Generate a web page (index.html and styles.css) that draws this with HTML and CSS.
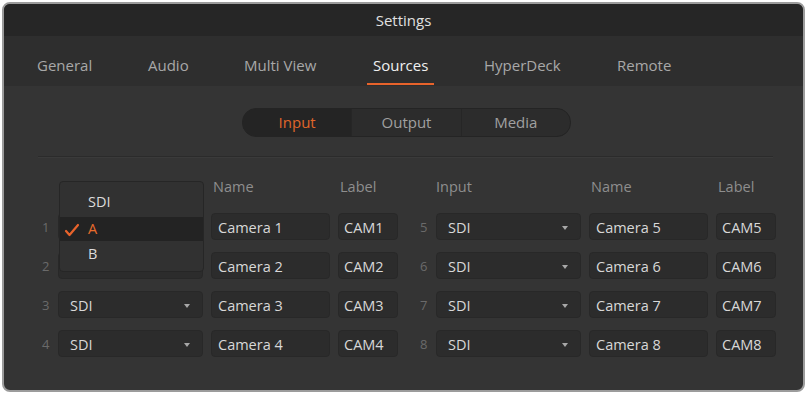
FILE: index.html
```html
<!DOCTYPE html>
<html lang="en">
<head>
    <meta charset="UTF-8">
    <title>Settings</title>
    <link rel="stylesheet" href="styles.css">
</head>
<body>
    <div class="window">
        <div class="titlebar">Settings</div>
        <div class="tabs">
            <span class="tab">General</span>
            <span class="tab">Audio</span>
            <span class="tab">Multi View</span>
            <span class="tab active">Sources</span>
            <span class="tab">HyperDeck</span>
            <span class="tab">Remote</span>
        </div>
        <div class="content">
            <div class="segmented">
                <span class="seg active">Input</span>
                <span class="seg">Output</span>
                <span class="seg">Media</span>
            </div>
            <div class="divider"></div>

            <div class="sources">
                <!-- Inputs 1 - 4 -->
                <div class="group">
                    <span></span><span class="head">Input</span><span class="head">Name</span><span class="head">Label</span>
                    <span class="num">1</span><div class="select"></div><div class="field">Camera 1</div><div class="field short">CAM1</div>
                    <span class="num">2</span><div class="select"></div><div class="field">Camera 2</div><div class="field short">CAM2</div>
                    <span class="num">3</span><div class="select">SDI</div><div class="field">Camera 3</div><div class="field short">CAM3</div>
                    <span class="num">4</span><div class="select">SDI</div><div class="field">Camera 4</div><div class="field short">CAM4</div>

                    <!-- open menu on input 1 -->
                    <div class="menu">
                        <div class="item">SDI</div>
                        <div class="item checked">
                            <svg class="check" width="16" height="14" viewBox="0 0 16 14">
                                <path d="M2 8 L5.5 12 L14 2" fill="none" stroke="#e8632b" stroke-width="2.2" stroke-linecap="round" stroke-linejoin="round"/>
                            </svg>A
                        </div>
                        <div class="item">B</div>
                    </div>
                </div>

                <!-- Inputs 5 - 8 -->
                <div class="group">
                    <span></span><span class="head">Input</span><span class="head">Name</span><span class="head">Label</span>
                    <span class="num">5</span><div class="select">SDI</div><div class="field">Camera 5</div><div class="field short">CAM5</div>
                    <span class="num">6</span><div class="select">SDI</div><div class="field">Camera 6</div><div class="field short">CAM6</div>
                    <span class="num">7</span><div class="select">SDI</div><div class="field">Camera 7</div><div class="field short">CAM7</div>
                    <span class="num">8</span><div class="select">SDI</div><div class="field">Camera 8</div><div class="field short">CAM8</div>
                </div>
            </div>
        </div>
    </div>
</body>
</html>
```

FILE: styles.css
```css
body {
    margin: 0;
    background-color: white;
    font-family: 'Open Sans', sans-serif;
    font-size: 14.5px;
    color: #d8d8d8;
}
.window {
    margin: 2px 3px 0 2px;
    height: 386px;
    border: 2px solid #9c9c9c;
    border-radius: 8px;
    background-color: #343434;
    overflow: hidden;
}
.titlebar {
    height: 32px;
    line-height: 32px;
    text-align: center;
    background-color: #262626;
    font-size: 15px;
    color: #e0e0e0;
}
.tabs {
    display: flex;
    height: 50px;
    padding-left: 30px;
    background-color: #2e2e2e;
}
.tab {
    box-sizing: border-box;
    padding: 0 3px;
    line-height: 58px;
    font-size: 15px;
    color: #a8a8a8;
    white-space: nowrap;
}
.tab:nth-child(1) { width: 111px; }
.tab:nth-child(2) { width: 96px; }
.tab:nth-child(3) { width: 129px; }
.tab:nth-child(4) { width: 111px; }
.tab:nth-child(5) { width: 133px; }
.tab.active {
    color: #f0f0f0;
    position: relative;
}
.tab.active::after {
    content: "";
    position: absolute;
    left: -3px;
    width: 67px;
    bottom: 1px;
    height: 2px;
    background-color: #e8632b;
}
.content {
    padding-top: 22px;
}
.segmented {
    display: flex;
    width: 327px;
    height: 27px;
    margin-left: 238px;
    border: 1px solid #242424;
    border-radius: 14px;
    background-color: #2c2c2c;
    overflow: hidden;
}
.seg {
    flex: 1;
    line-height: 27px;
    text-align: center;
    font-size: 15px;
    color: #a0a0a0;
    border-left: 1px solid #262626;
}
.seg:first-child {
    border-left: none;
}
.seg.active {
    background-color: #242424;
    color: #e0662a;
}
.divider {
    height: 1px;
    margin: 19px 30px 0 34px;
    background-color: #2b2b2b;
    border-bottom: 1px solid #3a3a3a;
}
.sources {
    display: flex;
    gap: 22px;
    padding-left: 38px;
    margin-top: 19px;
}
.group {
    position: relative;
    display: grid;
    grid-template-columns: 8px 145px 119px 60px;
    grid-template-rows: 24px repeat(4, 27px);
    column-gap: 8px;
    row-gap: 12px;
    align-items: center;
}
.group:first-child .head:nth-child(2) {
    visibility: hidden;
}
.head {
    color: #8e8e8e;
    padding-left: 2px;
    align-self: start;
    line-height: 20px;
}
.group:last-child .head:nth-child(2) {
    padding-left: 0;
}
.num {
    color: #6a6a6a;
    font-size: 13px;
}
.select, .field {
    height: 27px;
    line-height: 27px;
    box-sizing: border-box;
    background-color: #2c2c2c;
    border: 1px solid #282828;
    border-radius: 4px;
    white-space: nowrap;
}
.select {
    position: relative;
    padding-left: 11px;
}
.select::after {
    content: "";
    position: absolute;
    right: 12px;
    top: 12px;
    border-left: 3px solid transparent;
    border-right: 3px solid transparent;
    border-top: 4px solid #a8a8a8;
}
.field {
    padding-left: 6px;
}
.field.short {
    padding-left: 5px;
}
.menu {
    position: absolute;
    left: 17px;
    top: 4px;
    width: 145px;
    height: 91px;
    box-sizing: border-box;
    padding-top: 4px;
    background-color: #313131;
    border: 1px solid #262626;
    border-radius: 4px;
    z-index: 1;
}
.item {
    position: relative;
    height: 31px;
    line-height: 31px;
    padding-left: 28px;
    color: #dcdcdc;
}
.item.checked {
    height: 24px;
    line-height: 24px;
    background-color: #232323;
    color: #e86c2c;
}
.item:last-child {
    height: 28px;
    line-height: 26px;
}
.check {
    position: absolute;
    left: 4px;
    top: 6px;
}
```
